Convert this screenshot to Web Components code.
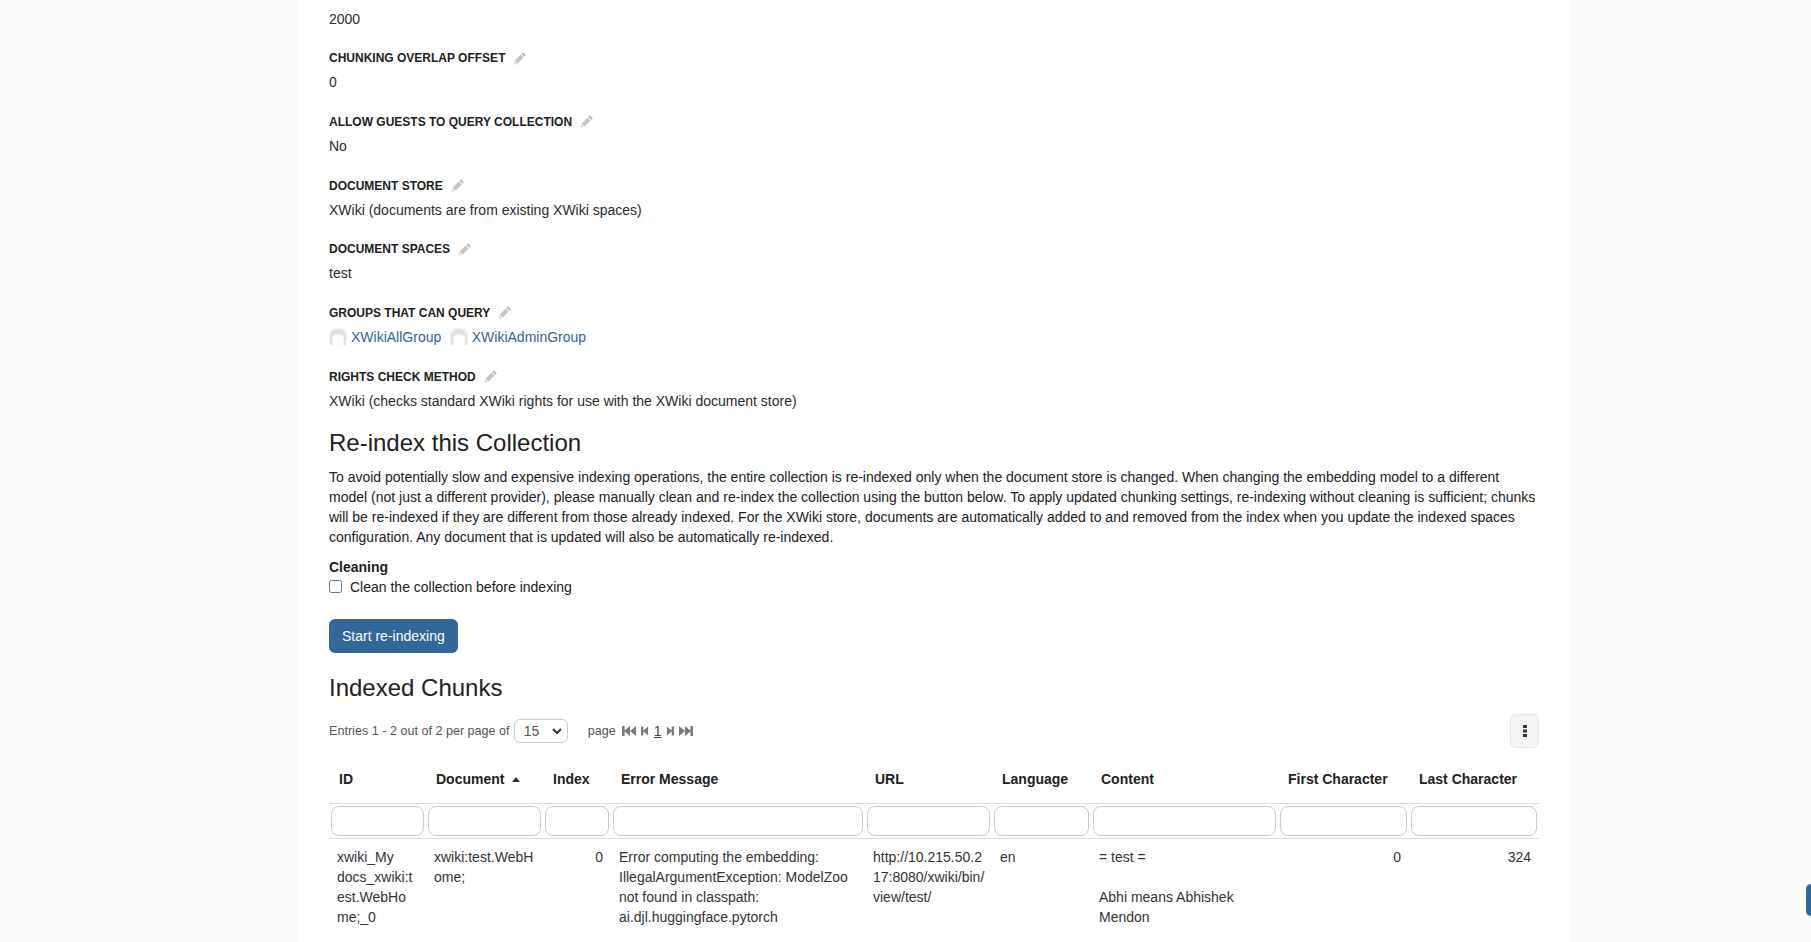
<!DOCTYPE html>
<html><head><meta charset="utf-8">
<style>
html,body{margin:0;padding:0;height:942px;overflow:hidden;background:#fafafa;font-family:"Liberation Sans",Arial,sans-serif;font-size:14px;line-height:20px;color:#212121}
</style></head><body>
<template id="t-prop"><style>
:host{display:block;margin-bottom:19.7px}
.l{display:flex;align-items:center;height:20px;margin-bottom:4px;font-size:12px;font-weight:700;text-transform:uppercase;color:#212121}
svg{margin-left:8px;width:13px;height:13px}
.v{height:20px;white-space:nowrap;color:#2b2b2b}
</style><div class="l"><slot name="label"></slot><svg viewBox="0 0 13 13"><path d="M9.9.3l2.9 2.9-1.5 1.5-2.9-2.9z" fill="#b8b8b8"/><path d="M7.7 2.5l2.9 2.9-6 6-2.9-2.9z" fill="#c4c4c4"/><path d="M1.2 9l2.9 2.9-3.6.9z" fill="#dadada"/></svg></div><div class="v"><slot></slot></div></template>
<script>
class Base extends HTMLElement{constructor(){super();const t=document.getElementById(this.constructor.tid);this.attachShadow({mode:"open"}).appendChild(t.content.cloneNode(true));}}
class XProp extends Base{static tid="t-prop"}
customElements.define("x-prop",XProp);
</script>
<template id="t-user"><style>
:host{display:inline-flex;align-items:center;margin-right:8.5px;color:#336699}
svg{width:18px;height:18px;margin-right:4px;border-radius:5px}
</style><svg viewBox="0 0 18 18"><rect width="18" height="18" fill="#f3f3f3"/><path d="M1 18V7C2 3 5 1 9 1s7 2 8 6v11h-2V9c-1-2-3-3-6-3S4 7 3 9v9z" fill="#dfdfdf"/><path d="M4 18V10c1-2 3-3 5-3s4 1 5 3v8z" fill="#fdfdfd"/></svg><slot></slot></template>
<template id="t-btn"><style>
:host{display:inline-block;background:#336699;color:#fff;border-radius:6px;padding:7px 13px;height:20px;font-size:14px;white-space:nowrap}
</style><slot></slot></template>
<template id="t-pager"><style>
:host{display:flex;align-items:center;height:34px;font-size:12.6px;color:#555;white-space:nowrap}
.sel{display:inline-flex;align-items:center;justify-content:space-between;box-sizing:border-box;width:54px;height:24px;border:1px solid #ccc;border-radius:6px;margin-left:4px;padding:0 5px 0 9px;font-size:14px;background:#fff}
.page{margin-left:20px;margin-right:4px}
svg{height:12px;display:block;fill:#7a7a7a}
.i{margin:0 2px}
u{margin:0 3px;font-size:14px;color:#444}
.menu{margin-left:auto;box-sizing:border-box;width:29px;height:34px;background:#f5f5f5;border:1px solid #e6e6e6;border-radius:6px;display:flex;align-items:center;justify-content:center}
.menu svg{height:12px;fill:#333}
</style><span>Entries 1 - 2 out of 2 per page of</span><span class="sel">15<svg viewBox="0 0 10 6" style="width:10px;height:6px;fill:none;stroke:#333;stroke-width:2"><path d="M1 1l4 4 4-4"/></svg></span><span class="page">page</span>
<svg class="i" viewBox="0 0 15 12" width="15"><path d="M0 1h2.6v10H0zM2 6l6-5v10zM8 6l6-5v10z"/></svg>
<svg class="i" viewBox="0 0 9 12" width="8"><path d="M0 1h2.6v10H0zM2 6l6-5v10z"/></svg>
<u>1</u>
<svg class="i" viewBox="0 0 9 12" width="8"><path d="M9 1H6.4v10H9zM7 6L1 1v10z"/></svg>
<svg class="i" viewBox="0 0 15 12" width="15"><path d="M15 1h-2.6v10H15zM13 6L7 1v10zM7 6L1 1v10z"/></svg>
<span class="menu"><svg viewBox="0 0 4 12" width="4"><path d="M0 0h4v3H0zM0 4.5h4v3H0zM0 9h4v3H0z"/></svg></span></template>
<template id="t-table"><style>
:host{display:block;margin-top:4.5px}
table{border-collapse:collapse;table-layout:fixed;width:1210px;font-size:14px;color:#333}
th{font-weight:700;text-align:left;padding:16px 10px 14px;color:#212121;white-space:nowrap;border-bottom:1px solid #ddd;height:20px}
.f td{padding:2px;border-bottom:1px solid #ddd;height:29px}
.box{box-sizing:border-box;height:30px;border:1px solid #ccc;border-radius:8px;background:#fff;display:block}
.r td{padding:8.5px 8px 9px;vertical-align:top;line-height:20px;overflow-wrap:anywhere}
.n{text-align:right}
.a{display:inline-block;width:0;height:0;border:4px solid transparent;border-bottom:5px solid #333;border-top:0;margin-left:8px;vertical-align:2px}
</style><table><colgroup><col style="width:97px"><col style="width:117px"><col style="width:68px"><col style="width:254px"><col style="width:127px"><col style="width:99px"><col style="width:187px"><col style="width:131px"><col style="width:130px"></colgroup>
<tr><th>ID</th><th>Document<span class="a"></span></th><th>Index</th><th>Error Message</th><th>URL</th><th>Language</th><th>Content</th><th>First Character</th><th>Last Character</th></tr>
<tr class="f"><td><span class="box"></span></td><td><span class="box"></span></td><td><span class="box"></span></td><td><span class="box"></span></td><td><span class="box"></span></td><td><span class="box"></span></td><td><span class="box"></span></td><td><span class="box"></span></td><td><span class="box"></span></td></tr>
<tr class="r"><td>xwiki_My docs_xwiki:t<wbr>est.WebHo<wbr>me;_0</td><td>xwiki:test.WebH<wbr>ome;</td><td class="n">0</td><td>Error computing the embedding: IllegalArgumentException: ModelZoo not found in classpath: ai.djl.huggingface.pytorch</td><td style="padding-right:3px">http://10.215.50.2<wbr>17:8080/xwiki/bin/<wbr>view/test/</td><td>en</td><td>= test =<br><br>Abhi means Abhishek Mendon</td><td class="n">0</td><td class="n">324</td></tr></table></template>
<template id="t-page"><style>
:host{display:block;box-sizing:border-box;width:1270px;height:942px;margin-left:299px;background:#fff;padding:0 30px;overflow:hidden;position:relative}
.in{margin-top:-15.5px}
</style><div class="in"><slot></slot></div></template>
<style>
h2{font-size:24px;font-weight:400;line-height:29px;margin:0;color:#212121}
p{margin:0}
</style>
<script>
for(const [n,id] of [["x-user","t-user"],["x-btn","t-btn"],["x-pager","t-pager"],["x-table","t-table"],["x-page","t-page"]]){
 customElements.define(n,class extends Base{static tid=id});
}
</script>
<x-page>
<x-prop><span slot="label">Chunking max size</span>2000</x-prop>
<x-prop><span slot="label">Chunking overlap offset</span>0</x-prop>
<x-prop><span slot="label">Allow guests to query collection</span>No</x-prop>
<x-prop><span slot="label">Document store</span>XWiki (documents are from existing XWiki spaces)</x-prop>
<x-prop><span slot="label">Document spaces</span>test</x-prop>
<x-prop><span slot="label">Groups that can query</span><x-user>XWikiAllGroup</x-user><x-user>XWikiAdminGroup</x-user></x-prop>
<x-prop><span slot="label">Rights check method</span>XWiki (checks standard XWiki rights for use with the XWiki document store)</x-prop>
<h2 style="margin-top:-2px">Re-index this Collection</h2>
<p style="margin-top:9.5px">To avoid potentially slow and expensive indexing operations, the entire collection is re-indexed only when the document store is changed. When changing the embedding model to a different model (not just a different provider), please manually clean and re-index the collection using the button below. To apply updated chunking settings, re-indexing without cleaning is sufficient; chunks will be re-indexed if they are different from those already indexed. For the XWiki store, documents are automatically added to and removed from the index when you update the indexed spaces configuration. Any document that is updated will also be automatically re-indexed.</p>
<div style="margin-top:10px;font-weight:700">Cleaning</div>
<label style="display:flex;align-items:center;height:20px"><input type="checkbox" style="margin:0 8px 0 0;width:13px;height:13px">Clean the collection before indexing</label>
<div style="margin-top:22px"><x-btn>Start re-indexing</x-btn></div>
<h2 style="margin-top:20px">Indexed Chunks</h2>
<div style="margin-top:12.5px"><x-pager></x-pager></div>
<x-table></x-table>
</x-page>
<div style="position:absolute;left:1806px;top:884px;width:10px;height:32px;background:#336699;border-radius:5px 0 0 5px"></div>
</body></html>
